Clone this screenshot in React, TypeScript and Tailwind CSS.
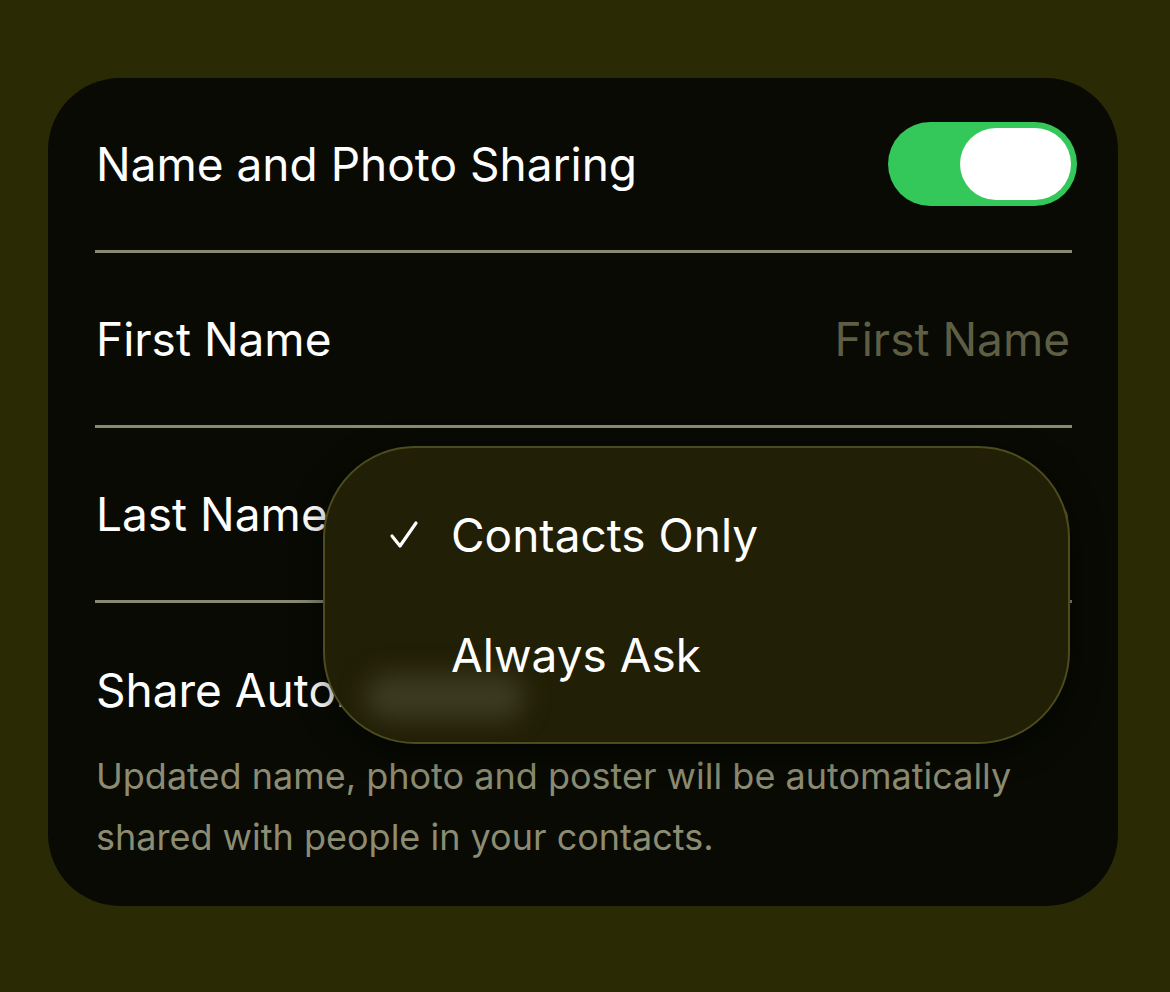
import React from 'react';

const font = { fontFamily: 'Inter, "Noto Sans", sans-serif' };

function Toggle() {
  return (
    <div className="flex h-[84px] w-[189px] items-center justify-end rounded-full bg-[#34c759] pr-[6px]">
      <div className="h-[72px] w-[111px] rounded-full bg-white" />
    </div>
  );
}

function Divider() {
  return <div className="mr-[46px] ml-[47px] h-[3px] bg-[#8a8a74]" />;
}

function Row({ label, placeholder }: { label: string; placeholder?: string }) {
  return (
    <div className="flex h-[172px] items-center justify-between pr-[48px] pl-[48px]">
      <span className="text-[46px] text-white">{label}</span>
      {placeholder && <span className="text-[46px] text-[#5e5e44]">{placeholder}</span>}
    </div>
  );
}

export default function App() {
  return (
    <div className="h-[992px] w-full overflow-hidden bg-[#2a2a05] pt-[78px] pl-[48px]" style={font}>
      <div className="relative h-[828px] w-[1070px] rounded-[72px] bg-[#080a03]">
        {/* Toggle row */}
        <div className="flex h-[172px] items-center justify-between pr-[41px] pl-[48px]">
          <span className="text-[46px] text-white">Name and Photo Sharing</span>
          <Toggle />
        </div>
        <Divider />
        <Row label="First Name" placeholder="First Name" />
        <Divider />
        <Row label="Last Name" placeholder="Last Name" />
        <Divider />
        <div className="pt-[60px] pl-[48px]">
          <span className="text-[46px] leading-[55px] text-white">Share Automatically</span>
        </div>
        <p className="mt-[28px] pr-[40px] pl-[48px] text-[36px] leading-[61px] text-[#8c8c72]">
          Updated name, photo and poster will be automatically shared with people in your contacts.
        </p>

        {/* Menu popup */}
        <div className="absolute top-[368px] left-[275px] h-[298px] w-[747px] overflow-hidden rounded-[92px] border-2 border-[#4d4c1e] bg-[#211f05] py-[27px] shadow-[0_8px_30px_rgba(0,0,0,0.5)]">
          <div className="absolute top-[226px] left-[40px] h-[46px] w-[160px] rounded-full bg-[#3c3b22] blur-md" />
          <div className="relative flex h-[120px] items-center">
            <svg className="ml-[64px] h-[30px] w-[30px]" viewBox="0 0 30 30" fill="none">
              <path d="M3 16 L11 26 L27 3" stroke="white" strokeWidth="3.2" strokeLinecap="round" strokeLinejoin="round" />
            </svg>
            <span className="ml-[32px] text-[46px] text-white">Contacts Only</span>
          </div>
          <div className="relative flex h-[120px] items-center">
            <span className="ml-[126px] text-[46px] text-white">Always Ask</span>
          </div>
        </div>
      </div>
    </div>
  );
}
